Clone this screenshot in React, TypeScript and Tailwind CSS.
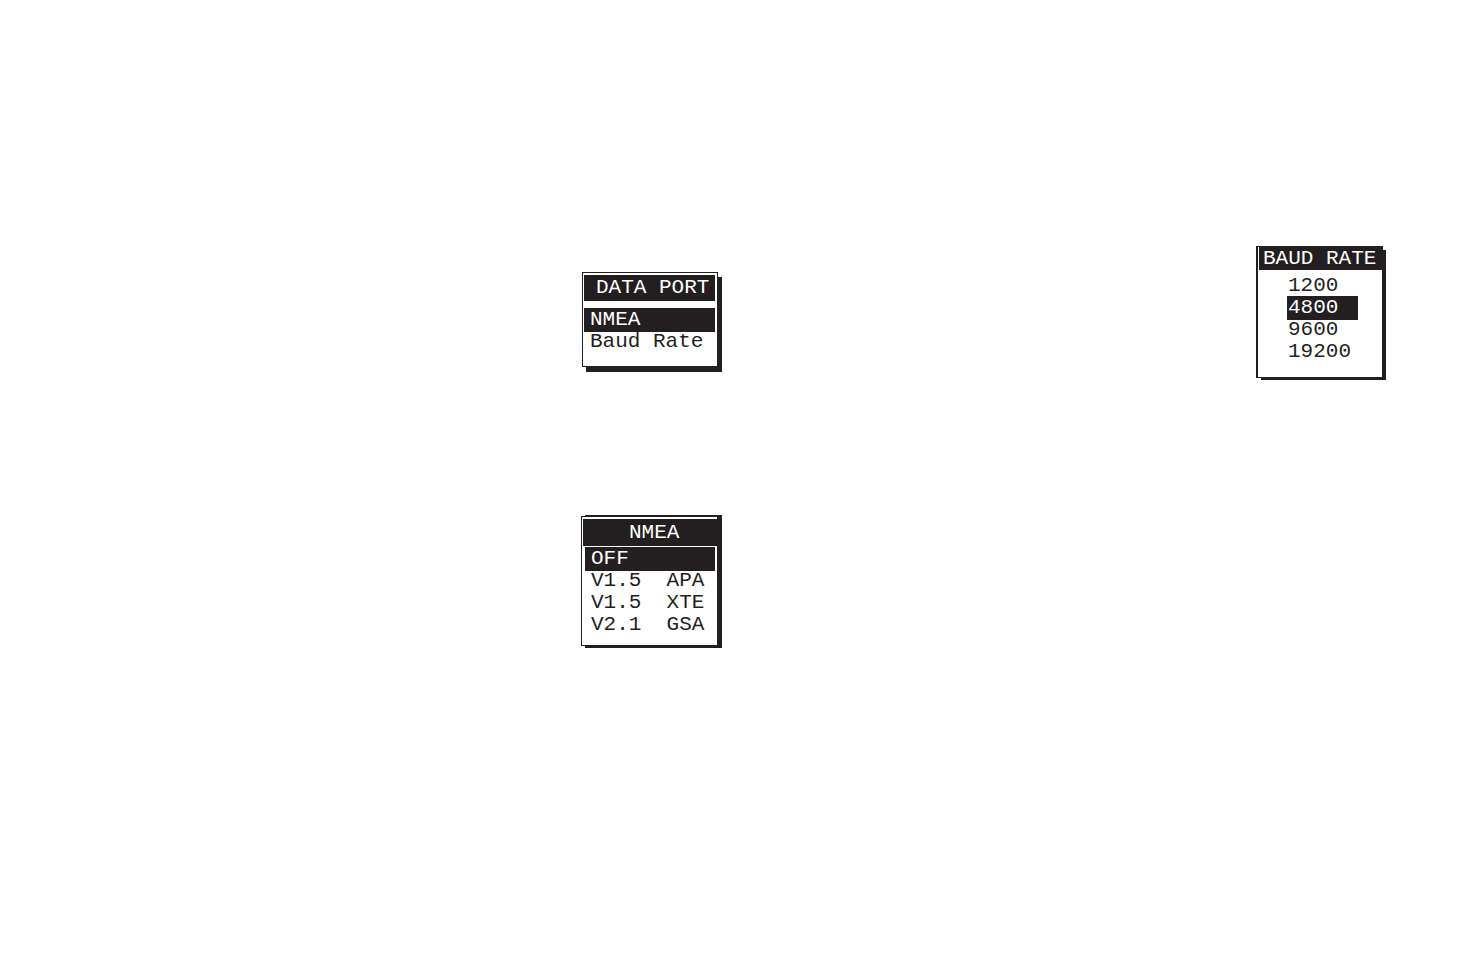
import React, { useState } from 'react';

type MenuProps = {
  title: string;
  items: string[];
  initial: string;
  boxClass: string;
  titleClass: string;
  listClass: string;
  itemClass: string;
};

const Menu = ({ title, items, initial, boxClass, titleClass, listClass, itemClass }: MenuProps) => {
  const [active, setActive] = useState(items.indexOf(initial));

  return (
    <section aria-label={title} className={`border-[#231f20] bg-white ${boxClass}`}>
      <h2 className={`flex items-center whitespace-pre bg-[#231f20] text-white ${titleClass}`}>{title}</h2>
      <ul className={listClass}>
        {items.map((item, index) => (
          <li key={index} className="flex">
            <button
              type="button"
              aria-pressed={active === index}
              onClick={() => setActive(index)}
              className={`flex items-center whitespace-pre text-left ${itemClass} ${
                active === index ? '-my-px h-6 bg-[#231f20] text-white' : 'h-[22px]'
              }`}
            >
              {item}
            </button>
          </li>
        ))}
      </ul>
    </section>
  );
};

const App = () => {
  return (
    <main className="flex min-h-screen items-start justify-between bg-white pl-[581px] pr-[92px] font-['Liberation_Mono',monospace] text-[21px] leading-[22px] text-[#231f20]">
      <div className="flex flex-col gap-[149px] pt-[272px]">
        <Menu
          title="DATA PORT"
          items={['NMEA', 'Baud Rate']}
          initial="NMEA"
          boxClass="ml-px w-[136px] border px-px pt-[2px] pb-[13px] shadow-[4px_5px_0_#231f20]"
          titleClass="mr-px h-[26px] pl-3"
          listClass="mr-px pt-2"
          itemClass="w-full pl-1.5"
        />
        <Menu
          title="NMEA"
          items={['OFF', 'V1.5  APA', 'V1.5  XTE', 'V2.1  GSA']}
          initial="OFF"
          boxClass="w-[137px] border pt-[2px] pl-px pb-[9px] shadow-[4px_-1px_0_#231f20,4px_2px_0_#231f20]"
          titleClass="h-[27px] pl-[46px]"
          listClass="ml-[2px] mr-[2px] pt-[2px]"
          itemClass="w-full pl-1.5"
        />
      </div>
      <div className="pt-[246px]">
        <Menu
          title="BAUD RATE"
          items={['1200', '4800', '9600', '19200']}
          initial="4800"
          boxClass="w-[127px] border border-l-2 pb-[14px] shadow-[4px_3px_0_-1px_#231f20]"
          titleClass="ml-px h-[23px] pl-1"
          listClass="ml-[29px] pt-[5px]"
          itemClass="w-[71px] pl-px"
        />
      </div>
    </main>
  );
};

export default App;
